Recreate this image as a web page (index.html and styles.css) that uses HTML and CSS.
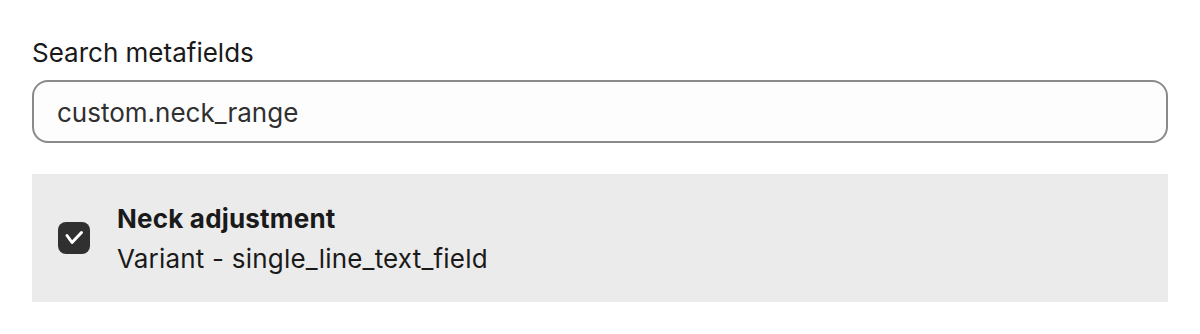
FILE: index.html
```html
<!DOCTYPE html>
<html lang="en">
  <head>
    <meta charset="UTF-8" />
    <meta name="viewport" content="width=device-width, initial-scale=1.0" />
    <title>Search metafields</title>
    <link rel="stylesheet" href="styles.css">
  </head>
  <body>
    <div class="panel">
      <label class="field-label" for="search">Search metafields</label>
      <input class="field-input" id="search" type="text" value="custom.neck_range" />

      <div class="result">
        <span class="checkbox">
          <svg width="32" height="32" viewBox="0 0 32 32">
            <path d="M9 13.5 L14 20.5 L23.5 10.5" fill="none" stroke="#fff" stroke-width="3" stroke-linecap="round" stroke-linejoin="round" />
          </svg>
        </span>
        <div class="result-text">
          <div class="result-title">Neck adjustment</div>
          <div class="result-sub">Variant - single_line_text_field</div>
        </div>
      </div>
    </div>
  </body>
</html>
```

FILE: styles.css
```css
body {
  margin: 0;
  background: #fff;
  font-family: Inter, "Noto Sans", sans-serif;
  color: #1a1a1a;
}
.panel {
  padding: 37px 32px 0 32px;
  display: flex;
  flex-direction: column;
}
.field-label {
  font-size: 26px;
  line-height: 32px;
  margin-bottom: 11px;
}
.field-input {
  box-sizing: border-box;
  height: 63px;
  width: 100%;
  margin: 0;
  padding: 2px 23px 0 23px;
  border: 2px solid #8a8a8a;
  border-radius: 16px;
  background: #fdfdfd;
  font-family: Inter, "Noto Sans", sans-serif;
  font-size: 26px;
  color: #303030;
  outline: none;
}
.result {
  margin-top: 31px;
  background: #ebebeb;
  display: flex;
  align-items: center;
  gap: 27px;
  padding: 25px 26px 23px 26px;
}
.checkbox {
  width: 32px;
  height: 32px;
  border-radius: 8px;
  background: #303030;
  display: flex;
  flex-shrink: 0;
  margin-top: -2px;
}
.result-text {
  font-size: 26px;
  line-height: 40px;
  letter-spacing: 0.2px;
}
.result-title {
  font-weight: 700;
}
```
